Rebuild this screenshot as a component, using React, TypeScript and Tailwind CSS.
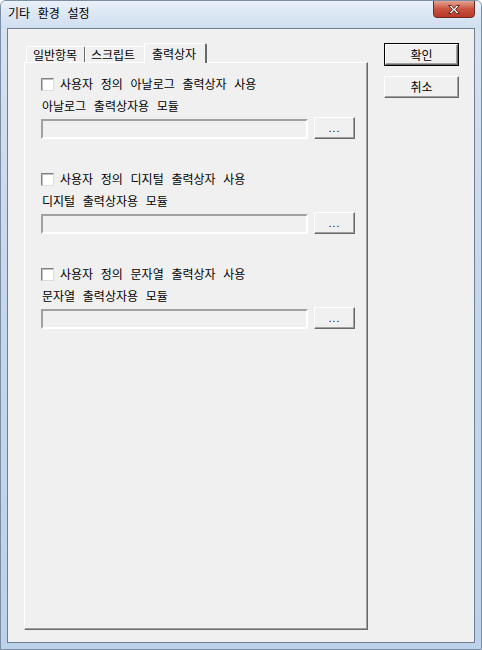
import React from "react";

const font = { fontFamily: '"Noto Sans CJK KR", "Noto Sans", sans-serif' };

function Checkbox() {
  return (
    <span className="w-[13px] h-[13px] shrink-0 border border-t-[#808080] border-l-[#808080] border-r-[#dcdcdc] border-b-[#dcdcdc] bg-white shadow-[inset_1px_1px_0_#c0c0c0]" />
  );
}

function ModuleGroup({ check, label }: { check: string; label: string }) {
  return (
    <div className="flex flex-col">
      <label className="flex items-center gap-[6px] h-[14px] whitespace-nowrap">
        <Checkbox />
        <span>{check}</span>
      </label>
      <div className="mt-[8px] h-[14px] flex items-center pl-[1px] whitespace-nowrap">{label}</div>
      <div className="mt-[4px] flex items-end">
        <div className="w-[267px] h-[20px] bg-[#f0f0f0] border-2 border-t-[#a0a0a0] border-l-[#a0a0a0] border-r-white border-b-white" />
        <button className="ml-[6px] w-[41px] h-[22px] bg-[#f0f0f0] border border-t-white border-l-white border-r-[#696969] border-b-[#696969] shadow-[inset_-1px_-1px_0_#a0a0a0] flex items-end justify-center pb-[5px] text-[10px] leading-none tracking-[1px]">
          ...
        </button>
      </div>
    </div>
  );
}

export default function App() {
  return (
    <div
      style={font}
      className="w-[482px] h-[650px] flex flex-col bg-gradient-to-b from-[#d6e3f1] via-[#c4d6eb] to-[#bcd2ea] border border-[#7a8ea5] rounded-t-[6px] text-[12px] text-black overflow-hidden [word-spacing:5px]"
    >
      {/* title bar */}
      <div className="h-[27px] flex items-start justify-between pl-[7px] pr-[6px] bg-gradient-to-b from-[#e9f0f9] to-[#cfdeef]">
        <span className="mt-[6px] text-[12px] leading-none whitespace-nowrap">기타 환경 설정</span>
        <button className="w-[42px] h-[18px] -mt-[1px] rounded-b-[4px] border border-[#6b2a24] bg-gradient-to-b from-[#e3a394] via-[#c9523e] to-[#b83a27] flex items-center justify-center">
          <svg width="14" height="11" viewBox="0 0 14 11">
            <path
              d="M1.5 1.5h3l2.5 3 2.5-3h3l-4 4 4 4h-3l-2.5-3-2.5 3h-3l4-4z"
              fill="#ffffff"
              stroke="#5a2a24"
              strokeWidth="1"
              strokeLinejoin="round"
            />
          </svg>
        </button>
      </div>

      {/* client area */}
      <div className="flex-1 mx-[6px] mb-[6px] border border-[#6f7f92] bg-[#f0f0f0] flex pt-[14px] pl-[16px]">
        <div className="w-[344px] flex flex-col">
          {/* tab strip */}
          <div className="h-[19px] flex items-end pl-[2px] whitespace-nowrap">
            <div className="h-[16px] w-[59px] pl-[6px] flex items-center border-l border-t border-white border-r border-r-[#696969] rounded-t-[2px] leading-none">
              일반항목
            </div>
            <div className="h-[16px] w-[60px] pl-[5px] flex items-center border-l border-t border-white border-r border-r-[#696969] rounded-t-[2px] leading-none">
              스크립트
            </div>
            <div className="relative z-10 -mb-[1px] h-[20px] w-[63px] pl-[7px] -ml-[1px] flex items-center bg-[#f0f0f0] border-l border-t border-white border-r-2 border-r-[#696969] rounded-t-[2px] leading-none">
              출력상자
            </div>
          </div>
          {/* tab panel */}
          <div className="h-[568px] border border-t-white border-l-white border-r-[#696969] border-b-[#696969] shadow-[inset_-1px_-1px_0_#a0a0a0] flex flex-col gap-[33px] pt-[14px] pl-[16px]">
            <ModuleGroup check="사용자 정의 아날로그 출력상자 사용" label="아날로그 출력상자용 모듈" />
            <ModuleGroup check="사용자 정의 디지털 출력상자 사용" label="디지털 출력상자용 모듈" />
            <ModuleGroup check="사용자 정의 문자열 출력상자 사용" label="문자열 출력상자용 모듈" />
          </div>
        </div>

        {/* buttons */}
        <div className="ml-[16px] flex flex-col">
          <button className="w-[75px] h-[23px] border border-black bg-[#f0f0f0]">
            <div className="w-full h-full flex items-center justify-center border border-t-white border-l-white border-r-[#696969] border-b-[#696969] shadow-[inset_-1px_-1px_0_#a0a0a0]">
              확인
            </div>
          </button>
          <button className="mt-[10px] w-[75px] h-[22px] flex items-center justify-center bg-[#f0f0f0] border border-t-white border-l-white border-r-[#696969] border-b-[#696969] shadow-[inset_-1px_-1px_0_#a0a0a0]">
            취소
          </button>
        </div>
      </div>
    </div>
  );
}
